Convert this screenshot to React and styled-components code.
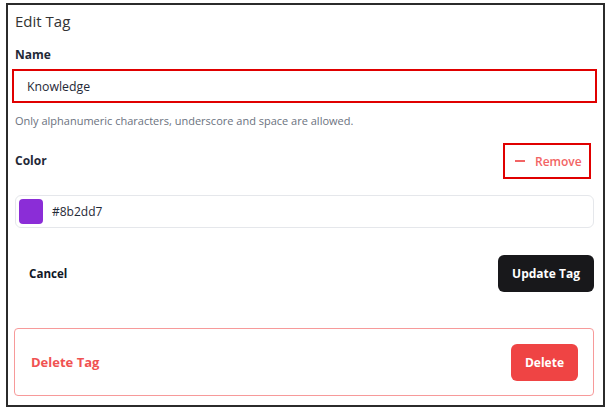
import React from "react";
import styled, { createGlobalStyle } from "styled-components";

const GlobalStyle = createGlobalStyle`
  body {
    margin: 0;
    background: #fff;
    font-family: "Open Sans", "Noto Sans", sans-serif;
    color: #1f2937;
  }
`;

const Frame = styled.div`
  margin: 3px 0 0 6px;
  width: 599px;
  height: 404px;
  box-sizing: border-box;
  border: 2px solid #2b2b2b;
  padding: 5px 9px 0 7px;
  display: flex;
  flex-direction: column;
`;

const Title = styled.h2`
  margin: 0;
  font-size: 15px;
  font-weight: 400;
  line-height: 22px;
  color: #333;
  height: 22px;
`;

const Label = styled.div`
  font-size: 12px;
  font-weight: 700;
  line-height: 18px;
  color: #1f2937;
  margin-top: ${(p) => p.$top || 0}px;
`;

const NameInput = styled.input`
  margin: 5px -3px 0 -3px;
  height: 34px;
  box-sizing: border-box;
  border: 2px solid #e00000;
  padding: 0 13px;
  font-family: inherit;
  font-size: 12.3px;
  color: #1f2937;
  outline: none;
`;

const Hint = styled.p`
  margin: 10px 0 0;
  font-size: 11px;
  line-height: 16px;
  color: #6b7280;
`;

const ColorRow = styled.div`
  margin-top: 14px;
  display: flex;
  align-items: center;
  justify-content: space-between;
`;

const RemoveButton = styled.button`
  margin-right: 3px;
  width: 88px;
  height: 36px;
  box-sizing: border-box;
  border: 2px solid #e00000;
  background: #fff;
  display: flex;
  align-items: center;
  gap: 10px;
  font-family: inherit;
  font-size: 12px;
  font-weight: 600;
  color: #f26464;
  padding: 0 0 0 10px;
`;

const Minus = styled.span`
  flex-shrink: 0;
  width: 10px;
  height: 1.5px;
  background: #f26464;
`;

const ColorField = styled.div`
  margin-top: 16px;
  height: 33px;
  box-sizing: border-box;
  border: 1px solid #e5e7eb;
  border-radius: 6px;
  display: flex;
  align-items: center;
  gap: 9px;
  padding: 0 3px;
  font-size: 12px;
  color: #1f2937;
`;

const Swatch = styled.span`
  flex-shrink: 0;
  width: 24px;
  height: 25px;
  border-radius: 4px;
  background: ${(p) => p.$color};
`;

const Actions = styled.div`
  margin-top: 27px;
  display: flex;
  align-items: center;
  justify-content: space-between;
`;

const GhostButton = styled.button`
  border: none;
  background: none;
  padding: 0 14px;
  font-family: inherit;
  font-size: 11.6px;
  font-weight: 700;
  color: #111827;
`;

const SolidButton = styled.button`
  height: 37px;
  border: none;
  border-radius: 6px;
  padding: 0 ${(p) => p.$pad || 14}px;
  background: ${(p) => p.$bg};
  color: #fff;
  font-family: inherit;
  font-size: 12px;
  font-weight: 700;
`;

const DangerZone = styled.div`
  margin: 36px 0 0 -1px;
  height: 68px;
  box-sizing: border-box;
  border: 1px solid #f79a9a;
  border-radius: 4px;
  display: flex;
  align-items: center;
  justify-content: space-between;
  padding: 0 15px 0 16px;
`;

const DangerTitle = styled.span`
  font-size: 13px;
  font-weight: 700;
  color: #f05252;
`;

export default function App() {
  return (
    <>
      <GlobalStyle />
      <Frame>
        <Title>Edit Tag</Title>
        <Label $top={14}>Name</Label>
        <NameInput defaultValue="Knowledge" />
        <Hint>Only alphanumeric characters, underscore and space are allowed.</Hint>
        <ColorRow>
          <Label>Color</Label>
          <RemoveButton>
            <Minus />
            Remove
          </RemoveButton>
        </ColorRow>
        <ColorField>
          <Swatch $color="#8b2dd7" />
          #8b2dd7
        </ColorField>
        <Actions>
          <GhostButton>Cancel</GhostButton>
          <SolidButton $bg="#18181b">Update Tag</SolidButton>
        </Actions>
        <DangerZone>
          <DangerTitle>Delete Tag</DangerTitle>
          <SolidButton $bg="#ef4444" $pad={14}>Delete</SolidButton>
        </DangerZone>
      </Frame>
    </>
  );
}
